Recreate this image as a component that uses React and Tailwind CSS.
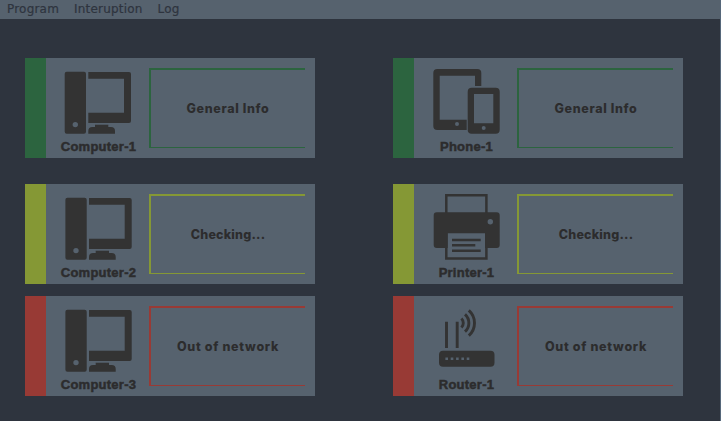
const Computer = ({ shift = 0 }) => (
  <g transform={`translate(${shift} 0)`}>
    <path fillRule="evenodd" d="M41.7 13.7h17.3a2 2 0 0 1 2 2v58a2 2 0 0 1-2 2H41.7a2 2 0 0 1-2-2v-58a2 2 0 0 1 2-2zM50.3 63.9a2.7 2.7 0 1 0 0 5.4a2.7 2.7 0 1 0 0-5.4z" />
    <path d="M63.3 14H104a2 2 0 0 1 2 2v47a2 2 0 0 1-2 2H63.3V54.7H99V20.7H63.3z" />
    <path d="M70 66.7h13.3v2.3H86a4 4 0 0 1 4 4v2.7H63.3V73a4 4 0 0 1 4-4H70z" />
  </g>
);

const Phone = () => (
  <>
    <path fillRule="evenodd" d="M44.3 11h40a4 4 0 0 1 4 4v13H82V17.7H46.7v44h27V72H44.3a4 4 0 0 1-4-4V15a4 4 0 0 1 4-4zM64 64a2 2 0 1 0 0 4a2 2 0 1 0 0-4z" />
    <path fillRule="evenodd" d="M78.7 29.7h24a4 4 0 0 1 4 4v38a4 4 0 0 1-4 4h-24a4 4 0 0 1-4-4v-38a4 4 0 0 1 4-4zM81 36v29.3h19.3V36zM90.7 68a2 2 0 1 0 0 4a2 2 0 1 0 0-4z" />
  </>
);

const Printer = () => (
  <>
    <path d="M53.3 29V11.2H93.4V29M53.3 49V74.5H93.4V49" fill="none" stroke="currentColor" strokeWidth="2.5" />
    <path fillRule="evenodd" d="M43.7 28.3h60a3 3 0 0 1 3 3V61a3 3 0 0 1-3 3H92V49.3H54.7V64h-11a3 3 0 0 1-3-3V31.3a3 3 0 0 1 3-3zM97.3 35a2.7 2.7 0 1 0 0 5.4a2.7 2.7 0 1 0 0-5.4z" />
    <path d="M59 56H87.7M59 61.3H82.3M59 66.7H87.7" stroke="currentColor" strokeWidth="2.5" />
  </>
);

const Router = () => (
  <>
    <path d="M53.5 25.7V52M64.2 25.7V52" stroke="currentColor" strokeWidth="2.9" />
    <rect x="46" y="54.7" width="55.5" height="16" rx="4" />
    <path d="M52.4 62.7H77" stroke="#56626e" strokeWidth="2.5" strokeDasharray="2.6 2.73" />
    <path
      d="M68.4 22.5A6.3 6.3 0 0 1 68.4 31.5M72 18.3A11.7 11.7 0 0 1 72 35.7M75.8 14.3A17 17 0 0 1 75.8 39.7"
      fill="none" stroke="currentColor" strokeWidth="2.9"
    />
  </>
);

const tones = {
  green: { bar: "bg-[#2c643f]", line: "border-[#2c643f]", text: "General Info", tracking: "tracking-[0.65px]" },
  yellow: { bar: "bg-[#859835]", line: "border-[#859835]", text: "Checking...", tracking: "tracking-[0.2px]" },
  red: { bar: "bg-[#983a35]", line: "border-[#983a35]", text: "Out of network", tracking: "tracking-[0.7px]" },
};

const devices = [
  { name: "Computer-1", tone: "green", icon: <Computer /> },
  { name: "Phone-1", tone: "green", icon: <Phone /> },
  { name: "Computer-2", tone: "yellow", icon: <Computer shift={0.7} /> },
  { name: "Printer-1", tone: "yellow", icon: <Printer /> },
  { name: "Computer-3", tone: "red", icon: <Computer shift={0.7} /> },
  { name: "Router-1", tone: "red", icon: <Router /> },
];

function Card({ name, tone, icon }) {
  const { bar, line, text, tracking } = tones[tone];
  return (
    <article className="flex h-[100px] w-[290px] bg-[#56626e] pr-2.5 text-[#2c2c2d]">
      <div className={`w-[21px] shrink-0 ${bar}`} />
      <div className="flex w-[103px] shrink-0 flex-col items-center">
        <svg viewBox="21 0 103 80" className="h-20 w-[103px] shrink-0 text-[#333333]" fill="currentColor">{icon}</svg>
        <span className="pl-[2px] font-['Liberation_Sans',Arial,sans-serif] text-[13px] leading-[18px] font-bold tracking-[0.25px] [-webkit-text-stroke:0.5px_#2c2c2d]">{name}</span>
      </div>
      <div className={`my-2.5 flex flex-1 items-center justify-center border-t-2 border-b border-l-2 ${line}`}>
        <span className={`pt-px font-[Inter,sans-serif] text-[12.5px] font-extrabold ${tracking}`}>{text}</span>
      </div>
    </article>
  );
}

export default function App() {
  return (
    <div className="h-[421px] w-[721px] overflow-hidden border-r border-[#56677a] bg-[#2e343e]">
      <nav className="flex h-[19px] items-center gap-[15px] bg-[#56626e] pl-[7px] font-['DejaVu_Sans',sans-serif] text-[12px] leading-[19px] tracking-[0.2px] text-[#2e343e] [-webkit-text-stroke:0.2px_#2e343e]">
        <span>Program</span>
        <span>Interuption</span>
        <span>Log</span>
      </nav>
      <main className="grid grid-cols-[290px_290px] grid-rows-[126px_112px_100px] gap-x-[78px] pt-[39px] pl-[25px]">
        {devices.map((d) => <Card key={d.name} {...d} />)}
      </main>
    </div>
  );
}
